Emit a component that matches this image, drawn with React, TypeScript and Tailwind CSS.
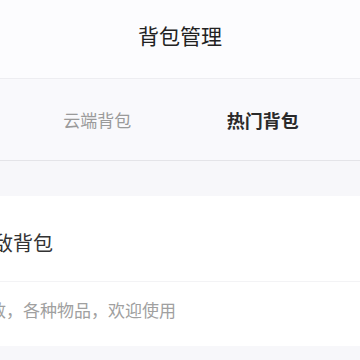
import React from 'react';

const font = "font-['Liberation_Sans','Noto_Sans_CJK_SC',sans-serif]";

const App: React.FC = () => {
  return (
    <div className={`w-[360px] h-[360px] overflow-hidden bg-[#f7f7fa] ${font}`}>
      <header className="h-[79px] bg-[#fcfcfe] border-b border-[#ededf1] flex items-center justify-center">
        <h1 className="text-[21px] leading-none text-[#222] pb-[5px]">背包管理</h1>
      </header>

      <nav className="h-[82px] bg-[#f9f9fc] border-b border-[#e4e4e8] flex px-4 pt-[5px] items-center">
        <div className="flex-1 flex justify-center">
          <span className="text-[17px] text-[#9a9a9a]">云端背包</span>
        </div>
        <div className="flex-1 flex justify-center pl-[3px]">
          <span className="text-[18px] font-semibold text-[#2a2a2a]">热门背包</span>
        </div>
      </nav>

      <div className="h-[35px]" />

      <section className="bg-white overflow-hidden">
        <div className="h-[86px] flex items-center border-b border-[#f3f3f5] pt-[10px]">
          <h2 className="ml-[-27px] text-[20px] text-[#333] whitespace-nowrap">无敌背包</h2>
        </div>
        <div className="h-[64px] flex items-center">
          <p className="ml-[-62px] text-[17px] text-[#a0a0a0] whitespace-nowrap pb-[5px]">
            天下无敌，各种物品，欢迎使用
          </p>
        </div>
      </section>
    </div>
  );
};

export default App;
